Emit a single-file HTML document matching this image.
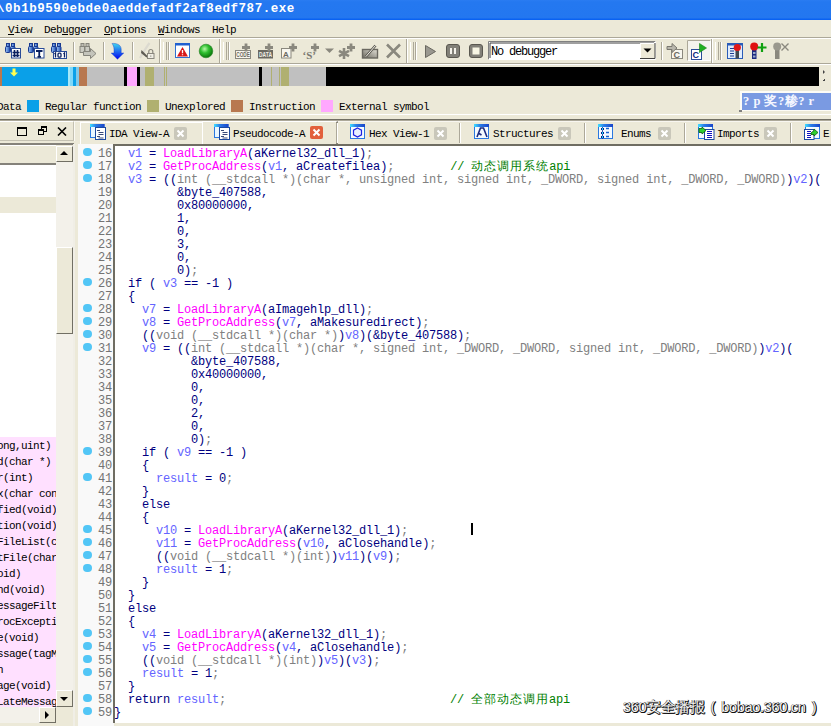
<!DOCTYPE html>
<html><head><meta charset="utf-8">
<style>
*{box-sizing:border-box}
html,body{margin:0;padding:0}
body{width:831px;height:726px;overflow:hidden;position:relative;background:#ece9d8;font-family:"Liberation Mono",monospace;color:#000}
.a{position:absolute}
#title{left:0;top:0;width:831px;height:20px;background:linear-gradient(#2a7cf2 0px,#2478f0 2px,#2377f0 18px,#0a62f2 19px)}
#title span{position:absolute;left:-3px;top:1px;font:bold 12.5px/17px "Liberation Mono";letter-spacing:0.55px;color:#fff;white-space:pre}
#menu{left:0;top:20px;width:831px;height:18px;background:#ece9d8;border-bottom:1px solid #aca899}
.mi{position:absolute;top:2.5px;font-size:11px;line-height:14px;letter-spacing:-0.6px;white-space:pre}
.mi u{text-decoration:underline}
#tb{left:0;top:38px;width:831px;height:27px;background:#ece9d8;border-top:1px solid #fff;border-bottom:1px solid #fff}
#tb:after{content:"";position:absolute;left:0;top:24px;width:831px;height:1px;background:#aca899}
.tbl{position:absolute;top:0;width:2px;height:25px;border-left:1px solid #aca899;border-right:1px solid #fff}
.sep{position:absolute;top:3px;width:2px;height:18px;border-left:1px solid #aca899;border-right:1px solid #fff}
.grip{position:absolute;top:3px;width:6px;height:18px;border-left:1px solid #fff;border-right:1px solid #aca899}
.grip:after{content:"";position:absolute;left:2px;top:0;width:2px;height:18px;border-left:1px solid #aca899;border-right:1px solid #fff}
#nav{left:0;top:67px;width:819px;height:19px;background:#c0c0c0;overflow:hidden}
#nav i{position:absolute;top:0;height:19px}
.leg{position:absolute;top:100px;font-size:11px;line-height:14px;letter-spacing:-0.6px;white-space:pre}
.lbox{position:absolute;top:100px;width:12px;height:12px}
#hsep{left:0;top:114px;width:831px;height:8px;border-top:1px solid #fff;border-bottom:1px solid #f8f6f0;background:linear-gradient(#ece9d8 4px,#716f64 4px,#716f64 5px,#aca899 5px,#aca899 6px,#ece9d8 6px)}
.tab{position:absolute;top:122px;height:22px}
.tt{position:absolute;top:126.5px;font-size:11px;line-height:14px;letter-spacing:-0.6px;white-space:pre}
.tx{position:absolute;top:127px;width:13px;height:13px;background:#c9c7ba;border-radius:2px}
.tsep{position:absolute;top:123px;width:2px;height:20px;border-left:1px solid #aca899;border-right:1px solid #fff}
#left{left:0;top:121px;width:75px;height:605px;overflow:hidden}
.lrow{position:absolute;left:-3px;font-size:11px;line-height:16px;letter-spacing:-0.6px;white-space:pre;padding-top:1px}
#gutter{left:78px;top:144px;width:36px;height:582px;background:#f9f9f9}
.gl{position:absolute;left:0;width:36px;height:13px}
.gl i{position:absolute;left:5.4px;top:4.2px;width:8.2px;height:8.2px;border-radius:50%;background:#52c6f6}
.gl b{position:absolute;right:2px;top:3px;font-weight:normal;color:#737373;font-size:12px;line-height:15px;letter-spacing:-0.2px}
#code{left:113px;top:144px;width:718px;height:579px;background:#fff;border-left:2px solid #6f6d62;border-top:2px solid #6f6d62}
.cl{position:absolute;left:-1px;height:13px;white-space:pre;color:#000080;font-size:12px;line-height:15px;letter-spacing:-0.2px}
.cl .g{color:#808080}.cl .v{color:#6464ff}.cl .f{color:#ff00ff}.cl .c{color:#008000}
.cl s{text-decoration:none;display:inline-block;width:13px;font-size:12px;letter-spacing:0;overflow:hidden;vertical-align:top}
</style></head><body>
<div id="title" class="a"><span>\0b1b9590ebde0aeddefadf2af8edf787.exe</span></div>
<div id="menu" class="a">
<div class="mi" style="left:8px"><u>V</u>iew</div>
<div class="mi" style="left:44px">Deb<u>u</u>gger</div>
<div class="mi" style="left:104px"><u>O</u>ptions</div>
<div class="mi" style="left:158px"><u>W</u>indows</div>
<div class="mi" style="left:212px">Help</div>
</div>
<div id="tb" class="a">
<div class="sep" style="left:73px"></div>
<div class="sep" style="left:103px"></div>
<div class="sep" style="left:132px"></div>
<div class="tbl" style="left:159px"></div>
<div class="grip" style="left:163px"></div>
<div class="tbl" style="left:219px"></div>
<div class="grip" style="left:223px"></div>
<div class="tbl" style="left:406px"></div>
<div class="grip" style="left:410px"></div>
<div class="sep" style="left:661px"></div>
<div class="tbl" style="left:711px"></div>
<div class="grip" style="left:715px"></div>
</div>
<div id="nav" class="a">
<i style="left:0;width:2px;background:#b87850"></i>
<i style="left:2px;width:66px;background:#0aa0e8"></i>
<i style="left:68px;width:2px;background:#a8e8f8"></i>
<i style="left:70px;width:3px;background:#80d8f8"></i>
<i style="left:73px;width:3px;background:#0aa0e8"></i>
<i style="left:76px;width:3px;background:#80c8e8"></i>
<i style="left:79px;width:8px;background:#b87850"></i>
<i style="left:124px;width:3px;background:#000"></i>
<i style="left:127px;width:10px;background:#ffa8ff"></i>
<i style="left:137px;width:3px;background:#000"></i>
<i style="left:145px;width:9px;background:#b0b070"></i>
<i style="left:164px;width:1px;background:#b0b070"></i>
<i style="left:166px;width:1px;background:#b0b070"></i>
<i style="left:259px;width:3px;background:#000"></i>
<i style="left:271px;width:1px;background:#b0b070"></i>
<i style="left:279px;width:1px;background:#b0b070"></i>
<i style="left:281px;width:8px;background:#b0b070"></i>
<i style="left:326px;width:493px;background:#000"></i>
</div>
<div class="leg" style="left:-3px">Data</div>
<div class="lbox" style="left:27px;background:#0aa0e8"></div>
<div class="leg" style="left:45px">Regular function</div>
<div class="lbox" style="left:147px;background:#b0b070"></div>
<div class="leg" style="left:165px">Unexplored</div>
<div class="lbox" style="left:231px;background:#b87850"></div>
<div class="leg" style="left:249px">Instruction</div>
<div class="lbox" style="left:321px;background:#ffa8ff"></div>
<div class="leg" style="left:339px">External symbol</div>
<div class="a" id="hsep"></div>
<!-- legend blue box -->
<div class="a" style="left:740px;top:91px;width:91px;height:20px;background:#fdfcf6"></div>
<div class="a" style="left:742px;top:93px;width:89px;height:17px;background:#7a9ae2"></div>
<div class="a" style="left:743px;top:93px;font:bold 12.5px/17px 'Liberation Serif';color:#f4f6ff;white-space:pre;letter-spacing:0.5px">? p 奖?糁? r</div>
<div class="a" style="left:739px;top:110px;width:3px;height:2px;background:#808080"></div>
<!-- nav right arrows -->
<div class="a" style="left:823px;top:70px;width:0;height:0;border-left:2px solid #444;border-top:2px solid transparent;border-bottom:2px solid transparent"></div>
<div class="a" style="left:823px;top:79px;width:2px;height:2px;border-right:1px solid #444;border-bottom:1px solid #444"></div>

<!-- tabs -->
<div class="a" style="left:74px;top:121px;width:1px;height:20px;background:#fbfaf4"></div>
<div class="tab" style="left:80px;width:123px;border-top:1px solid #fff;border-left:1px solid #fff;border-right:1px solid #d8d4c4;top:122px;background:#ece9d8"></div>
<div class="tab" style="left:202px;width:136px;top:121px;height:23px;border-top:1px solid #fff;border-left:1px solid #fff;border-right:2px solid #8a877a;background:#ece9d8"></div>
<div class="tsep" style="left:459px"></div>
<div class="tsep" style="left:584px"></div>
<div class="tsep" style="left:684px"></div>
<div class="tsep" style="left:790px"></div>
<div class="tsep" style="left:336px"></div>
<div class="tt" style="left:109px">IDA View-A</div>
<div class="tt" style="left:233px">Pseudocode-A</div>
<div class="tt" style="left:369px">Hex View-1</div>
<div class="tt" style="left:493px">Structures</div>
<div class="tt" style="left:621px">Enums</div>
<div class="tt" style="left:717px">Imports</div>
<div class="tt" style="left:823px">E</div>
<div class="tx" style="left:174px"><svg width="13" height="13"><path d="M3.5 3.5l6 6M9.5 3.5l-6 6" stroke="#fff" stroke-width="2"/></svg></div>
<div class="tx" style="left:310px;top:126px;background:#e2603c"><svg width="13" height="13"><path d="M3.5 3.5l6 6M9.5 3.5l-6 6" stroke="#fff" stroke-width="2"/></svg></div>
<div class="tx" style="left:434px"><svg width="13" height="13"><path d="M3.5 3.5l6 6M9.5 3.5l-6 6" stroke="#fff" stroke-width="2"/></svg></div>
<div class="tx" style="left:558px"><svg width="13" height="13"><path d="M3.5 3.5l6 6M9.5 3.5l-6 6" stroke="#fff" stroke-width="2"/></svg></div>
<div class="tx" style="left:658px"><svg width="13" height="13"><path d="M3.5 3.5l6 6M9.5 3.5l-6 6" stroke="#fff" stroke-width="2"/></svg></div>
<div class="tx" style="left:764px"><svg width="13" height="13"><path d="M3.5 3.5l6 6M9.5 3.5l-6 6" stroke="#fff" stroke-width="2"/></svg></div>

<!-- left panel -->
<div class="a" id="left">
 <div class="a" style="left:-2px;top:0;width:76px;height:20px;border-top:1px solid #fff;border-right:1px solid #c4c1b2;border-bottom:1px solid #c4c1b2"></div>
 <div class="a" style="left:17px;top:6px;width:10px;height:9px;border:1px solid #000;border-top-width:2px"></div>
 <div class="a" style="left:41px;top:5px;width:6px;height:6px;border:1px solid #000;border-top-width:2px"></div>
 <div class="a" style="left:38px;top:8px;width:6px;height:6px;border:1px solid #000;border-top-width:2px;background:#ece9d8"></div>
 <svg class="a" style="left:57px;top:6px" width="10" height="9"><path d="M1 0.5l8 8M9 0.5l-8 8" stroke="#000" stroke-width="1.6"/></svg>
 <!-- list -->
 <div class="a" style="left:0;top:22px;width:74px;height:2px;background:#85827a"></div>
 <div class="a" style="left:0;top:24px;width:56px;height:20px;background:#ece9d8;border-top:1px solid #fff;border-bottom:2px solid #85827a"></div>
 <div class="a" style="left:0;top:44px;width:56px;height:272px;background:#fff"></div>
 <div class="a" style="left:0;top:76px;width:56px;height:16px;background:#ece9d8"></div>
 <div class="a" style="left:0;top:316px;width:56px;height:270px;background:#ffe0ff"></div>
 <div class="a" style="left:0;top:316px;width:56px;height:270px;overflow:hidden">
  <div class="lrow" style="top:0px">ong,uint)</div>
  <div class="lrow" style="top:16px">d(char *)</div>
  <div class="lrow" style="top:32px">r(int)</div>
  <div class="lrow" style="top:48px">x(char con</div>
  <div class="lrow" style="top:64px">fied(void)</div>
  <div class="lrow" style="top:80px">tion(void)</div>
  <div class="lrow" style="top:96px">FileList(c</div>
  <div class="lrow" style="top:112px">tFile(char</div>
  <div class="lrow" style="top:128px">oid)</div>
  <div class="lrow" style="top:144px">nd(void)</div>
  <div class="lrow" style="top:160px">essageFilt</div>
  <div class="lrow" style="top:176px">rocExcepti</div>
  <div class="lrow" style="top:192px">e(void)</div>
  <div class="lrow" style="top:208px">ssage(tagM</div>
  <div class="lrow" style="top:224px">n</div>
  <div class="lrow" style="top:240px">age(void)</div>
  <div class="lrow" style="top:256px">LateMessag</div>
 </div>
 <div class="a" style="left:56px;top:40px;width:17px;height:545px;background:#f3f1ea"></div>
 <div class="a" style="left:56px;top:25px;width:17px;height:16px;background:#ece9d8;border-top:1px solid #fff;border-left:1px solid #fff;border-right:1px solid #716f64;border-bottom:1px solid #716f64"></div>
 <div class="a" style="left:60px;top:30px;width:0;height:0;border-left:4px solid transparent;border-right:4px solid transparent;border-bottom:4px solid #000"></div>
 <div class="a" style="left:56px;top:126px;width:17px;height:87px;background:#ece9d8;border-top:1px solid #fff;border-left:1px solid #fff;border-right:1px solid #716f64;border-bottom:1px solid #716f64"></div>
 <div class="a" style="left:56px;top:569px;width:17px;height:17px;background:#ece9d8;border-top:1px solid #fff;border-left:1px solid #fff;border-right:1px solid #716f64;border-bottom:1px solid #716f64"></div>
 <div class="a" style="left:60px;top:576px;width:0;height:0;border-left:4px solid transparent;border-right:4px solid transparent;border-top:4px solid #000"></div>
 <div class="a" style="left:0;top:586px;width:56px;height:16px;background:#f3f1ea"></div>
 <div class="a" style="left:0;top:602px;width:75px;height:10px;background:#ece9d8"></div>
 <div class="a" style="left:39px;top:586px;width:17px;height:16px;background:#ece9d8;border-top:1px solid #fff;border-left:1px solid #fff;border-right:1px solid #716f64;border-bottom:1px solid #716f64"></div>
 <div class="a" style="left:45px;top:590px;width:0;height:0;border-top:4px solid transparent;border-bottom:4px solid transparent;border-left:4px solid #000"></div>
 <div class="a" style="left:73px;top:23px;width:5px;height:582px;background:#f0eee6;border-right:1px solid #d8d4c4"></div>
</div>
<svg class="a" style="left:0;top:38px" width="831" height="28" viewBox="0 38 831 28">
<defs>
<linearGradient id="bl" x1="0" x2="1"><stop offset="0" stop-color="#9cc4f4"/><stop offset="1" stop-color="#1f4fb4"/></linearGradient>
<g id="bino">
 <rect x="1.5" y="0.5" width="3" height="3" fill="url(#bl)" stroke="#1a3a90"/>
 <rect x="6.5" y="0.5" width="3" height="3" fill="url(#bl)" stroke="#1a3a90"/>
 <rect x="0.5" y="3.5" width="4.5" height="6" rx="1" fill="url(#bl)" stroke="#1a3a90"/>
 <rect x="5.5" y="3.5" width="4.5" height="6" rx="1" fill="url(#bl)" stroke="#1a3a90"/>
</g>
<radialGradient id="gr" cx="0.4" cy="0.35" r="0.6"><stop offset="0" stop-color="#b8f8a8"/><stop offset="0.5" stop-color="#30c030"/><stop offset="1" stop-color="#108010"/></radialGradient>
<linearGradient id="arr" x1="0" y1="0" x2="0" y2="1"><stop offset="0" stop-color="#40d8f0"/><stop offset="1" stop-color="#0000f0"/></linearGradient>
</defs>
<!-- binoculars # -->
<use href="#bino" x="5" y="43"/>
<rect x="11.5" y="48.5" width="9" height="9.5" fill="#fff" stroke="#2a4c98"/>
<path d="M14.5 50v7M17.5 50v7M12.5 52.5h7M12.5 55.5h7" stroke="#0a2060" stroke-width="1.6"/>
<!-- binoculars T -->
<use href="#bino" x="28" y="43"/>
<rect x="34.5" y="48.5" width="9.5" height="9.5" fill="#fff" stroke="#2a4c98"/>
<path d="M36 51h6.5M39.25 50.5v6.5M37.5 56.8h3.5" stroke="#0a2060" stroke-width="1.8"/>
<!-- binoculars 101 -->
<use href="#bino" x="51" y="43"/>
<rect x="53.5" y="51.5" width="13" height="7" fill="#fff" stroke="#2a4c98"/>
<path d="M55.5 57.5v-4.5l-1 1M64.5 57.5v-4.5l-1 1" stroke="#0a2060" stroke-width="1.3" fill="none"/><rect x="58" y="53.2" width="3" height="4" rx="1" stroke="#0a2060" stroke-width="1.3" fill="none"/>
<!-- gray binoculars arrow -->
<g opacity="0.9">
<rect x="81" y="43.5" width="3" height="3" fill="#b8b8b0" stroke="#7a7a72"/>
<rect x="86" y="43.5" width="3" height="3" fill="#b8b8b0" stroke="#7a7a72"/>
<rect x="80" y="46.5" width="4.5" height="6" fill="#c8c8c0" stroke="#7a7a72"/>
<rect x="85" y="46.5" width="4.5" height="6" fill="#c8c8c0" stroke="#7a7a72"/>
<path d="M83.5 51.5h7v-3l5.5 5-5.5 5v-3h-7z" fill="#c0c0b8" stroke="#7a7a72"/>
</g>
<!-- blue down arrow -->
<path d="M112 43.5c4-0.5 9 1 9.2 5.5v4h2.6l-6.3 6.3-6.3-6.3h2.8v-3.5c0-2.5-0.8-4.5-2-6z" fill="url(#arr)" stroke="#1838c0" stroke-width="0.4"/>
<!-- disabled pen lock -->
<path d="M149.5 43c-3 4-6 9-9.5 15" stroke="#dcdad0" stroke-width="2.2" fill="none"/>
<path d="M141.5 50l6.5 6.5-1.5 1-5.5-4.5z" fill="#5e5c54"/>
<rect x="147.5" y="53.5" width="6.5" height="5" fill="#f0eee4" stroke="#8a887e"/>
<path d="M148.8 53.5v-2a2 2 0 0 1 4 0v2" fill="none" stroke="#8a887e" stroke-width="1.2"/>
<rect x="150.3" y="55.6" width="1" height="1" fill="#6a685e"/>
<!-- warning window -->
<rect x="175.5" y="43.5" width="14" height="14" fill="#fff" stroke="#3070d0"/>
<rect x="175" y="43" width="15" height="2.5" fill="#2060d0"/>
<path d="M182.5 47l5.5 9.5h-11z" fill="#d81818"/>
<path d="M182.5 50v3.2M182.5 54.3v1" stroke="#fff" stroke-width="1.3"/>
<!-- green ball -->
<circle cx="206" cy="51" r="6.8" fill="url(#gr)" stroke="#208020" stroke-width="0.6"/>
<!-- CODE + -->
<rect x="235.5" y="50.5" width="15" height="8" fill="#f8f6ee" stroke="#8a887e"/>
<text x="236.3" y="57.3" font-family="Liberation Sans" font-weight="bold" font-size="7.2" fill="#6a6860" textLength="13.5" lengthAdjust="spacingAndGlyphs">CODE</text>
<path d="M246 43.5v8M242 47.5h8" stroke="#8a887e" stroke-width="2.8"/>
<!-- DATA + -->
<rect x="258" y="50" width="15" height="8.5" fill="#6a6860"/>
<text x="259" y="57.3" font-family="Liberation Sans" font-weight="bold" font-size="7.2" fill="#f0eee6" textLength="13" lengthAdjust="spacingAndGlyphs">DATA</text>
<path d="M269 43.5v8M265 47.5h8" stroke="#8a887e" stroke-width="2.8"/>
<!-- A + -->
<rect x="281.5" y="48.5" width="9.5" height="9.5" fill="#f8f6ee" stroke="#8a887e"/>
<text x="283" y="56.8" font-family="Liberation Sans" font-weight="bold" font-size="8" fill="#6a6860">A</text>
<path d="M293 43.5v8M289 47.5h8" stroke="#8a887e" stroke-width="2.8"/>
<!-- 's' + -->
<text x="302.5" y="58.5" font-family="Liberation Serif" font-weight="bold" font-size="11" fill="#7a7870">‘S’</text>
<path d="M315 43.5v8M311 47.5h8" stroke="#8a887e" stroke-width="2.8"/>
<path d="M325 48.5h9l-4.5 4.5z" fill="#8a887e"/>
<!-- * + -->
<path d="M344 48v11M339 50.8l10 5.4M339 56.2l10-5.4" stroke="#8a887e" stroke-width="2.6"/>
<path d="M351 43.5v8M347 47.5h8" stroke="#8a887e" stroke-width="2.8"/>
<!-- pen box -->
<linearGradient id="pg" x1="0" y1="1" x2="1" y2="0"><stop offset="0" stop-color="#6a685e"/><stop offset="1" stop-color="#e4e2d8"/></linearGradient>
<rect x="362.5" y="49.5" width="15" height="8.5" fill="url(#pg)" stroke="#6a6860" stroke-width="1.4"/>
<path d="M366 56.5l9.5-11" stroke="#5a5850" stroke-width="2.6"/>
<path d="M366 56.5l9.5-11" stroke="#f4f2ea" stroke-width="1"/>
<!-- big X -->
<path d="M387 44.5l13 13M400 44.5l-13 13" stroke="#8a887e" stroke-width="2.6"/>
<!-- play pause stop -->
<path d="M425.5 45.5v12l10-6z" fill="#9a9890" stroke="#6a6860"/>
<rect x="446.5" y="44.5" width="13" height="13" rx="2.5" fill="#828078" stroke="#5a5850"/>
<rect x="450" y="48" width="2" height="6" fill="#f4f2ea"/><rect x="454" y="48" width="2" height="6" fill="#f4f2ea"/>
<rect x="469.5" y="44.5" width="13" height="13" rx="2.5" fill="#828078" stroke="#5a5850"/>
<rect x="472.5" y="47.5" width="7" height="7" fill="#f8f6e4"/>
<!-- combobox -->
<rect x="488.5" y="41.5" width="167" height="18" fill="#fff" stroke="#ece9d8"/>
<path d="M488.5 59.5V41.5h167" fill="none" stroke="#808080"/><path d="M488.5 59.5h167v-18" fill="none" stroke="#fff"/>
<path d="M490 58V43h164" fill="none" stroke="#404040"/>
<rect x="640" y="43" width="15" height="15.5" fill="#ece9d8"/>
<path d="M640.5 58.5v-15h14" fill="none" stroke="#fff"/>
<path d="M640 58.5h15v-15.5" fill="none" stroke="#404040"/>
<path d="M643.5 48.5h8l-4 4z" fill="#000"/>
<text x="491" y="55.3" font-family="Liberation Mono" font-size="12" letter-spacing="-1.2" fill="#000">No debugger</text>
<!-- arrow C -->
<rect x="671.5" y="49.5" width="11" height="9" fill="#f8f6ee" stroke="#8a887e"/>
<text x="673.5" y="57.5" font-family="Liberation Sans" font-weight="bold" font-size="9" fill="#6a6860">C</text>
<path d="M667 46.5h5v-3l5 4.5-5 4.5v-3h-5z" fill="#b8b6ac" stroke="#7a7870"/>
<!-- pressed C play -->
<rect x="687" y="40" width="23.5" height="21" fill="#f4f3ee"/>
<path d="M687.5 61v-20.5h23" fill="none" stroke="#aca899"/>
<path d="M687.5 60.5h23v-20" fill="none" stroke="#fff"/>
<rect x="691.5" y="49.5" width="10" height="10" fill="#fff" stroke="#2a4c98"/>
<text x="692.5" y="58.3" font-family="Liberation Sans" font-weight="bold" font-size="9" fill="#0a2a80">C</text>
<path d="M699.5 43.5v9l7-4.5z" fill="#20b020" stroke="#108010" stroke-width="0.6"/>
<!-- list pin -->
<rect x="727.5" y="43.5" width="15" height="15" fill="#e0ecfc" stroke="#2a5cb8"/>
<rect x="727" y="43" width="16" height="2.5" fill="#2a5cb8"/>
<path d="M730 48.5h4M730 51h4M730 53.5h4M730 56h4" stroke="#1a3a90" stroke-width="1.2"/>
<rect x="735.5" y="50" width="3.5" height="8.5" fill="#404850"/>
<circle cx="737.3" cy="47.5" r="3.6" fill="#e01818"/>
<!-- red pin + -->
<rect x="752" y="49.5" width="4.5" height="9.5" fill="#1a2a80"/>
<rect x="753" y="52" width="2.5" height="2" fill="#9aa8c8"/><rect x="753" y="55.5" width="2.5" height="2" fill="#9aa8c8"/>
<circle cx="754.2" cy="46.5" r="4" fill="#e01010"/>
<path d="M762 43v9M757.5 47.5h9" stroke="#10a010" stroke-width="2.2"/>
<!-- gray pin x -->
<rect x="775" y="49.5" width="4.5" height="9.5" fill="#8a887e"/>
<circle cx="777.2" cy="46.5" r="4" fill="#9a988e"/>
<path d="M781.5 43.5l7 7M788.5 43.5l-7 7" stroke="#8a887e" stroke-width="1.4"/>
</svg>
<div id="gutter" class="a">
<div class="gl" style="top:0px"><i></i><b>16</b></div>
<div class="gl" style="top:13px"><i></i><b>17</b></div>
<div class="gl" style="top:26px"><i></i><b>18</b></div>
<div class="gl" style="top:39px"><b>19</b></div>
<div class="gl" style="top:52px"><b>20</b></div>
<div class="gl" style="top:65px"><b>21</b></div>
<div class="gl" style="top:78px"><b>22</b></div>
<div class="gl" style="top:91px"><b>23</b></div>
<div class="gl" style="top:104px"><b>24</b></div>
<div class="gl" style="top:117px"><b>25</b></div>
<div class="gl" style="top:130px"><i></i><b>26</b></div>
<div class="gl" style="top:143px"><b>27</b></div>
<div class="gl" style="top:156px"><i></i><b>28</b></div>
<div class="gl" style="top:169px"><i></i><b>29</b></div>
<div class="gl" style="top:182px"><i></i><b>30</b></div>
<div class="gl" style="top:195px"><i></i><b>31</b></div>
<div class="gl" style="top:208px"><b>32</b></div>
<div class="gl" style="top:221px"><b>33</b></div>
<div class="gl" style="top:234px"><b>34</b></div>
<div class="gl" style="top:247px"><b>35</b></div>
<div class="gl" style="top:260px"><b>36</b></div>
<div class="gl" style="top:273px"><b>37</b></div>
<div class="gl" style="top:286px"><b>38</b></div>
<div class="gl" style="top:299px"><i></i><b>39</b></div>
<div class="gl" style="top:312px"><b>40</b></div>
<div class="gl" style="top:325px"><i></i><b>41</b></div>
<div class="gl" style="top:338px"><b>42</b></div>
<div class="gl" style="top:351px"><b>43</b></div>
<div class="gl" style="top:364px"><b>44</b></div>
<div class="gl" style="top:377px"><i></i><b>45</b></div>
<div class="gl" style="top:390px"><i></i><b>46</b></div>
<div class="gl" style="top:403px"><i></i><b>47</b></div>
<div class="gl" style="top:416px"><i></i><b>48</b></div>
<div class="gl" style="top:429px"><b>49</b></div>
<div class="gl" style="top:442px"><b>50</b></div>
<div class="gl" style="top:455px"><b>51</b></div>
<div class="gl" style="top:468px"><b>52</b></div>
<div class="gl" style="top:481px"><i></i><b>53</b></div>
<div class="gl" style="top:494px"><i></i><b>54</b></div>
<div class="gl" style="top:507px"><i></i><b>55</b></div>
<div class="gl" style="top:520px"><i></i><b>56</b></div>
<div class="gl" style="top:533px"><b>57</b></div>
<div class="gl" style="top:546px"><i></i><b>58</b></div>
<div class="gl" style="top:559px"><i></i><b>59</b></div></div><div id="code" class="a"><div class="a" style="left:0;top:1px;width:716px;height:578px">
<div class="cl" style="top:0px">  <span class="v">v1</span> = <span class="f">LoadLibraryA</span>(aKernel32_dll_1)<span class="g">;</span></div>
<div class="cl" style="top:13px">  <span class="v">v2</span> = <span class="f">GetProcAddress</span>(<span class="v">v1</span>, aCreatefilea)<span class="g">;</span>        <span class="c">// <s>动</s><s>态</s><s>调</s><s>用</s><s>系</s><s>统</s>api</span></div>
<div class="cl" style="top:26px">  <span class="v">v3</span> = ((<span class="g">int (__stdcall *)(char *, unsigned int, signed int, _DWORD, signed int, _DWORD, _DWORD)</span>)<span class="v">v2</span>)(</div>
<div class="cl" style="top:39px">         &amp;byte_407588,</div>
<div class="cl" style="top:52px">         0x80000000,</div>
<div class="cl" style="top:65px">         1,</div>
<div class="cl" style="top:78px">         0,</div>
<div class="cl" style="top:91px">         3,</div>
<div class="cl" style="top:104px">         0,</div>
<div class="cl" style="top:117px">         0)<span class="g">;</span></div>
<div class="cl" style="top:130px">  if ( <span class="v">v3</span> == -1 )</div>
<div class="cl" style="top:143px">  {</div>
<div class="cl" style="top:156px">    <span class="v">v7</span> = <span class="f">LoadLibraryA</span>(aImagehlp_dll)<span class="g">;</span></div>
<div class="cl" style="top:169px">    <span class="v">v8</span> = <span class="f">GetProcAddress</span>(<span class="v">v7</span>, aMakesuredirect)<span class="g">;</span></div>
<div class="cl" style="top:182px">    ((<span class="g">void (__stdcall *)(char *)</span>)<span class="v">v8</span>)(&amp;byte_407588)<span class="g">;</span></div>
<div class="cl" style="top:195px">    <span class="v">v9</span> = ((<span class="g">int (__stdcall *)(char *, signed int, _DWORD, _DWORD, signed int, _DWORD, _DWORD)</span>)<span class="v">v2</span>)(</div>
<div class="cl" style="top:208px">           &amp;byte_407588,</div>
<div class="cl" style="top:221px">           0x40000000,</div>
<div class="cl" style="top:234px">           0,</div>
<div class="cl" style="top:247px">           0,</div>
<div class="cl" style="top:260px">           2,</div>
<div class="cl" style="top:273px">           0,</div>
<div class="cl" style="top:286px">           0)<span class="g">;</span></div>
<div class="cl" style="top:299px">    if ( <span class="v">v9</span> == -1 )</div>
<div class="cl" style="top:312px">    {</div>
<div class="cl" style="top:325px">      <span class="v">result</span> = 0<span class="g">;</span></div>
<div class="cl" style="top:338px">    }</div>
<div class="cl" style="top:351px">    else</div>
<div class="cl" style="top:364px">    {</div>
<div class="cl" style="top:377px">      <span class="v">v10</span> = <span class="f">LoadLibraryA</span>(aKernel32_dll_1)<span class="g">;</span></div>
<div class="cl" style="top:390px">      <span class="v">v11</span> = <span class="f">GetProcAddress</span>(<span class="v">v10</span>, aClosehandle)<span class="g">;</span></div>
<div class="cl" style="top:403px">      ((<span class="g">void (__stdcall *)(int)</span>)<span class="v">v11</span>)(<span class="v">v9</span>)<span class="g">;</span></div>
<div class="cl" style="top:416px">      <span class="v">result</span> = 1<span class="g">;</span></div>
<div class="cl" style="top:429px">    }</div>
<div class="cl" style="top:442px">  }</div>
<div class="cl" style="top:455px">  else</div>
<div class="cl" style="top:468px">  {</div>
<div class="cl" style="top:481px">    <span class="v">v4</span> = <span class="f">LoadLibraryA</span>(aKernel32_dll_1)<span class="g">;</span></div>
<div class="cl" style="top:494px">    <span class="v">v5</span> = <span class="f">GetProcAddress</span>(<span class="v">v4</span>, aClosehandle)<span class="g">;</span></div>
<div class="cl" style="top:507px">    ((<span class="g">void (__stdcall *)(int)</span>)<span class="v">v5</span>)(<span class="v">v3</span>)<span class="g">;</span></div>
<div class="cl" style="top:520px">    <span class="v">result</span> = 1<span class="g">;</span></div>
<div class="cl" style="top:533px">  }</div>
<div class="cl" style="top:546px">  return <span class="v">result</span><span class="g">;</span>                                <span class="c">// <s>全</s><s>部</s><s>动</s><s>态</s><s>调</s><s>用</s>api</span></div>
<div class="cl" style="top:559px">}</div></div></div>
<svg class="a" style="left:0;top:118px" width="831" height="26" viewBox="0 118 831 26">
<defs>
<linearGradient id="tbar" x1="0" x2="1"><stop offset="0" stop-color="#40e0ff"/><stop offset="0.4" stop-color="#2a7ce8"/><stop offset="1" stop-color="#1a44c8"/></linearGradient>
<g id="win"><rect x="0.5" y="0.5" width="14" height="14" fill="#f4faff" stroke="#2a78e0"/><rect x="0" y="0" width="15" height="3" fill="url(#tbar)"/></g>
<g id="ida">
 <rect x="0.5" y="0.5" width="13.5" height="13" fill="#e8f6ff" stroke="#2a78e0"/><rect x="0" y="0" width="14.5" height="3" fill="url(#tbar)"/>
 <rect x="5.5" y="3.5" width="10" height="12" fill="#fff" stroke="#1c4aa0"/>
 <path d="M7 6.5h3M8.5 8.5h5M8.5 10.5h5M7 12.5h3M8.5 14h5" stroke="#3a4a78" stroke-width="1"/>
</g>
</defs>
<use href="#ida" x="90" y="124"/>
<use href="#ida" x="214" y="124"/>
<use href="#win" x="350" y="124"/>
<path d="M357.5 128l4 2.2v4.6l-4 2.2-4-2.2v-4.6z" fill="#e8f0ff" stroke="#2020e0" stroke-width="1.2"/>
<use href="#win" x="474" y="124"/>
<path d="M477 137l3.5-9h3l3.5 9M479 133.5l2.5 1.5" fill="none" stroke="#1a2a80" stroke-width="1.6"/>
<use href="#win" x="598" y="124"/>
<path d="M602.5 127.5l1.5 1.5-1.5 1.5-1.5-1.5zM602.5 131.5l1.5 1.5-1.5 1.5-1.5-1.5zM602.5 135.5l1.5 1.5-1.5 1.5-1.5-1.5z" fill="#20e0f0" stroke="#0a1a90"/>
<path d="M606 128.5h3M606 132.5h3M606 136.5h3" stroke="#1a60d0" stroke-width="1.3"/>
<use href="#win" x="698" y="124"/>
<rect x="704.5" y="129.5" width="9.5" height="10" fill="#fff" stroke="#1c4aa0"/>
<path d="M707 131.5h5M707 133.5h5M707 135.5h5M707 137.5h5" stroke="#1010c0" stroke-width="1"/>
<path d="M699 128.5l3 0 0-1.5 4 3.5-4 3.5 0-1.5-3 0z" fill="#30d030" stroke="#0a5a0a" stroke-width="0.8"/>
<use href="#win" x="805" y="124"/>
<rect x="804.5" y="129.5" width="9.5" height="10" fill="#fff" stroke="#1c4aa0"/>
<path d="M807 131.5h4M807 133.5h4M807 135.5h4M807 137.5h4" stroke="#1010c0" stroke-width="1"/>
<path d="M811 133l3-2.5 0-1.5 4 3.5-4 3.5 0-1.5-3 0z" fill="#30d030" stroke="#0a5a0a" stroke-width="0.8"/>
</svg>
<!-- yellow arrow on nav -->
<svg class="a" style="left:10px;top:68px" width="9" height="9"><path d="M2.5 0.5h3v4h2.5l-4 4-4-4h2.5z" fill="#ffff50"/></svg>
<!-- cursor -->
<div class="a" style="left:471px;top:523px;width:2px;height:12px;background:#000"></div>
<!-- watermark -->
<div class="a" style="left:623px;top:697px;height:20px;font:14.5px/20px 'Liberation Sans';color:#f4f4f4;white-space:pre;letter-spacing:-0.3px;word-spacing:2.5px;text-shadow:1px 1px 0 #111,0 1px 0 #111,1px 0 0 #222,-0.5px 0 0 #666">360<span style="font-size:14.5px;letter-spacing:-0.5px">安全播报</span> ( bobao.360.cn )</div>
</body></html>
